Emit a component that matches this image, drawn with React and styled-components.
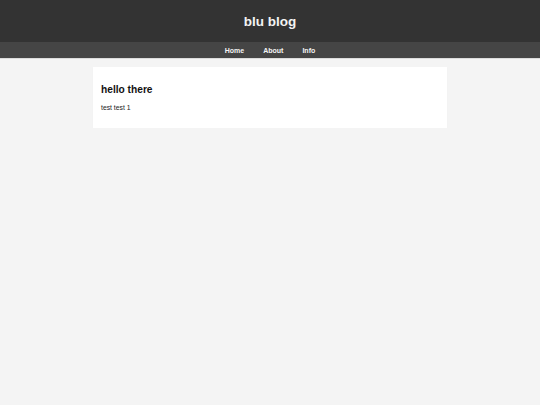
import styled, { createGlobalStyle } from "styled-components";

const GlobalStyle = createGlobalStyle`
  html, body {
    margin: 0;
    padding: 0;
    background: #f4f4f4;
    font-family: "Liberation Sans", Arial, sans-serif;
  }
`;

const App = () => {
  return (
    <>
      <GlobalStyle />
      <Header>
        <Title>blu blog</Title>
      </Header>
      <Nav>
        <NavLink href="#">Home</NavLink>
        <NavLink href="#">About</NavLink>
        <NavLink href="#">Info</NavLink>
      </Nav>
      <Main>
        <Post>
          <PostTitle>hello there</PostTitle>
          <PostBody>test test 1</PostBody>
        </Post>
      </Main>
    </>
  );
};

const Header = styled.header`
  background: #333333;
  height: 42px;
  display: flex;
  align-items: center;
  justify-content: center;
`;

const Title = styled.h1`
  margin: 0;
  color: #f4f4f4;
  font-size: 13.5px;
  font-weight: bold;
`;

const Nav = styled.nav`
  background: #454545;
  height: 16px;
  border-bottom: 1px solid #dcdcdc;
  display: flex;
  align-items: center;
  justify-content: center;
  gap: 19px;
`;

const NavLink = styled.a`
  color: #f4f4f4;
  font-size: 7px;
  font-weight: bold;
  text-decoration: none;
`;

const Main = styled.main`
  width: 354px;
  margin: 8px auto 0;
`;

const Post = styled.article`
  background: #ffffff;
  padding: 17px 8px 17px;
  box-shadow: 0 1px 1px rgba(0, 0, 0, 0.04);
`;

const PostTitle = styled.h2`
  margin: 0 0 9px;
  font-size: 10.2px;
  font-weight: bold;
  color: #111111;
`;

const PostBody = styled.p`
  margin: 0;
  font-size: 6.8px;
  color: #222222;
`;

export default App;
